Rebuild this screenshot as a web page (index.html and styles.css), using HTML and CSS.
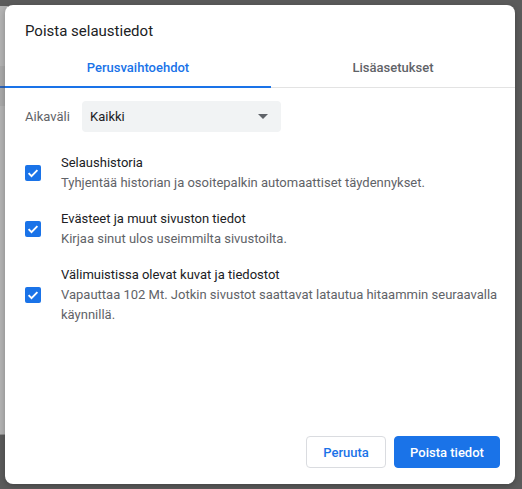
FILE: index.html
```html
<!DOCTYPE html>
<html lang="fi">
<head>
<meta charset="utf-8">
<title>Poista selaustiedot</title>
<link rel="stylesheet" href="styles.css">
</head>
<body>
<div class="screen">
  <div class="backdrop-strip"></div>
  <div class="dialog">
    <h1 class="title">Poista selaustiedot</h1>
    <div class="tabs">
      <div class="tab tab-basic active">Perusvaihtoehdot</div>
      <div class="tab tab-advanced">Lisäasetukset</div>
    </div>
    <div class="content">
      <div class="range">
        <span class="range-label">Aikaväli</span>
        <div class="select">
          <span>Kaikki</span>
          <svg class="caret" width="10" height="5" viewBox="0 0 10 5"><path d="M0 0h10L5 5z" fill="#5f6368"/></svg>
        </div>
      </div>
      <div class="option">
        <span class="checkbox"><svg width="16" height="16" viewBox="0 0 16 16"><path d="M3.6 8.2l2.9 2.9 5.9-5.9" fill="none" stroke="#fff" stroke-width="1.9"/></svg></span>
        <div class="option-text">
          <div class="option-title">Selaushistoria</div>
          <div class="option-sub">Tyhjentää historian ja osoitepalkin automaattiset täydennykset.</div>
        </div>
      </div>
      <div class="option">
        <span class="checkbox"><svg width="16" height="16" viewBox="0 0 16 16"><path d="M3.6 8.2l2.9 2.9 5.9-5.9" fill="none" stroke="#fff" stroke-width="1.9"/></svg></span>
        <div class="option-text">
          <div class="option-title">Evästeet ja muut sivuston tiedot</div>
          <div class="option-sub">Kirjaa sinut ulos useimmilta sivustoilta.</div>
        </div>
      </div>
      <div class="option">
        <span class="checkbox"><svg width="16" height="16" viewBox="0 0 16 16"><path d="M3.6 8.2l2.9 2.9 5.9-5.9" fill="none" stroke="#fff" stroke-width="1.9"/></svg></span>
        <div class="option-text">
          <div class="option-title">Välimuistissa olevat kuvat ja tiedostot</div>
          <div class="option-sub">Vapauttaa 102 Mt. Jotkin sivustot saattavat latautua hitaammin seuraavalla käynnillä.</div>
        </div>
      </div>
    </div>
    <div class="actions">
      <button class="btn btn-cancel">Peruuta</button>
      <button class="btn btn-primary">Poista tiedot</button>
    </div>
  </div>
</div>
</body>
</html>
```

FILE: styles.css
```css
html, body {
  margin: 0;
  padding: 0;
}
body {
  width: 522px;
  height: 489px;
  overflow: hidden;
  background: #5b5b5b;
  font-family: Roboto, "Liberation Sans", Arial, sans-serif;
}
.screen {
  position: relative;
  width: 522px;
  height: 489px;
  display: flex;
  padding: 5px 7px 5px 5px;
  box-sizing: border-box;
}
.backdrop-strip {
  position: absolute;
  left: 0;
  top: 6px;
  width: 8px;
  height: 428px;
  background: linear-gradient(to bottom, #b3b3b3 0 60px, #a9a9a9 60px 100px, #b3b3b3 100px);
  border-bottom: 1px solid #8c8c8c;
}
.backdrop-strip::after {
  content: "";
  position: absolute;
  left: 0;
  top: 80px;
  width: 8px;
  height: 2px;
  background: #2d62b5;
}

.dialog {
  position: relative;
  flex: 1;
  background: #fff;
  border-radius: 8px;
  display: flex;
  flex-direction: column;
  color: #202124;
  box-shadow: 0 2px 6px rgba(0,0,0,0.25);
}
.title {
  margin: 0;
  padding: 15px 20px 0 20px;
  font-size: 15px;
  font-weight: 400;
  line-height: 22px;
  color: #202124;
}
.tabs {
  display: flex;
  margin-top: 14px;
  border-bottom: 1px solid #e3e3e3;
}
.tab {
  height: 32px;
  display: flex;
  justify-content: center;
  align-items: flex-start;
  padding-top: 4px;
  font-size: 13px;
  font-weight: 500;
  color: #5f6368;
  box-sizing: border-box;
  border-bottom: 2px solid transparent;
  margin-bottom: -1px;
}
.tab-basic {
  width: 266px;
}
.tab-advanced {
  flex: 1;
}
.tab.active {
  color: #1a73e8;
  border-bottom-color: #1a73e8;
}
.content {
  flex: 1;
  padding: 13px 10px 0 20px;
}
.range {
  display: flex;
  align-items: center;
  height: 31px;
}
.range-label {
  font-size: 13px;
  color: #5f6368;
  width: 57px;
}
.select {
  width: 199px;
  height: 31px;
  background: #f1f3f4;
  border-radius: 4px;
  display: flex;
  align-items: center;
  justify-content: space-between;
  padding: 0 8px 0 8px;
  box-sizing: border-box;
  font-size: 13px;
  color: #202124;
}
.caret {
  margin-right: 5px;
}
.option {
  display: flex;
  align-items: center;
  margin-top: 16px;
}
.range + .option {
  margin-top: 21px;
}
.checkbox {
  width: 16px;
  height: 16px;
  border-radius: 2px;
  background: #1a73e8;
  flex: none;
  display: flex;
  margin-right: 20px;
}
.option-text {
  flex: 1;
  font-size: 13px;
  line-height: 20px;
}
.option-title {
  color: #202124;
}
.option-sub {
  color: #5f6368;
}
.actions {
  display: flex;
  justify-content: flex-end;
  gap: 8px;
  padding: 0 15px 16px 0;
}
.btn {
  height: 32px;
  border-radius: 4px;
  font-family: inherit;
  font-size: 13px;
  font-weight: 500;
  padding: 0 15px;
  cursor: pointer;
}
.btn-cancel {
  background: #fff;
  border: 1px solid #dadce0;
  color: #1a73e8;
  width: 80px;
}
.btn-primary {
  background: #1a73e8;
  border: 1px solid #1a73e8;
  color: #fff;
  width: 106px;
}
```
